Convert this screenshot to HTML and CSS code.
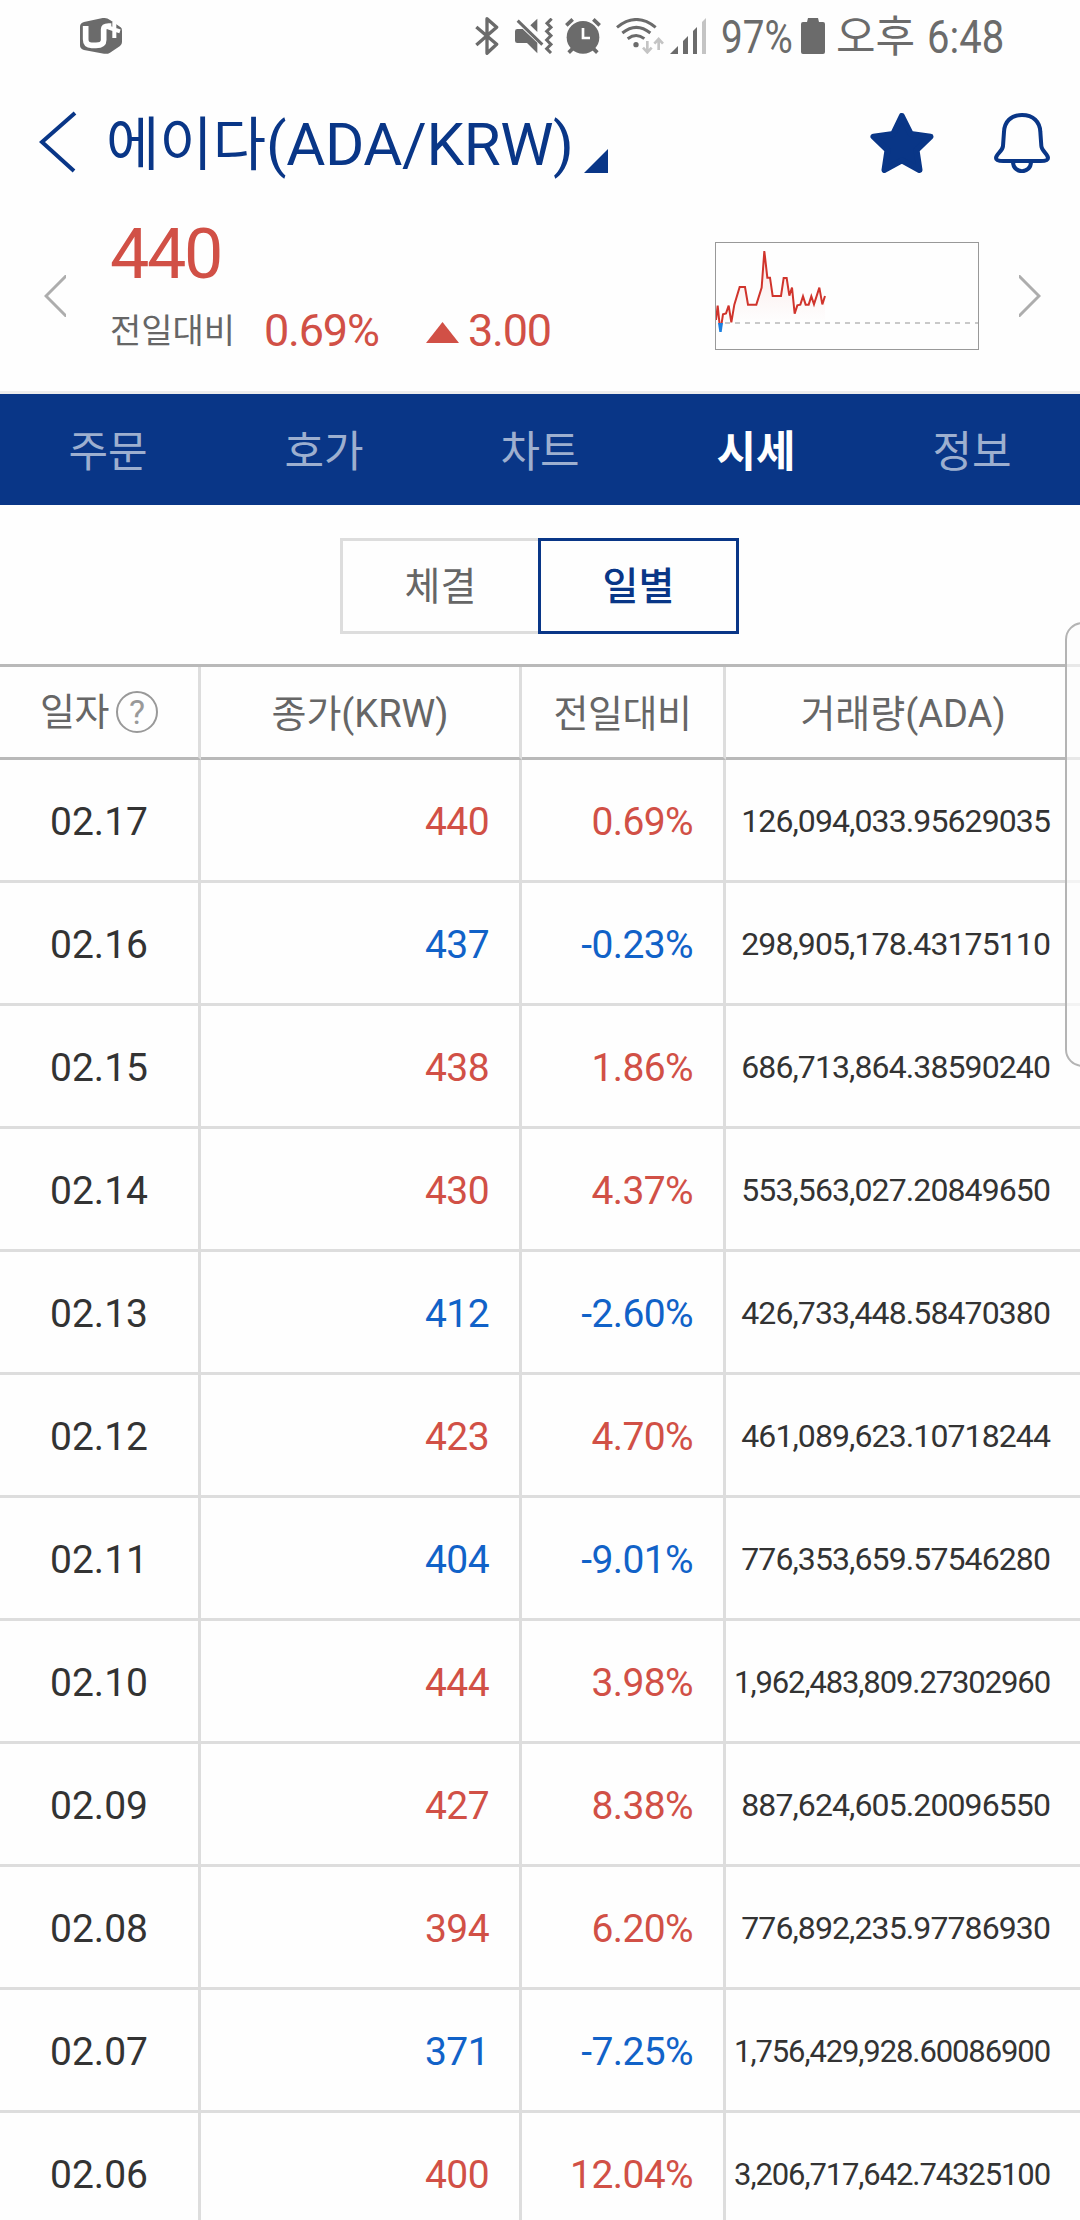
FILE: index.html
```
<!DOCTYPE html>
<html lang="ko">
<head>
<meta charset="utf-8">
<title>에이다(ADA/KRW)</title>
<link rel="stylesheet" href="styles.css">
</head>
<body>

<div class="statusbar">
    <svg class="carrier" width="42" height="36" viewBox="232 54 126 108">
        <path fill="#6b6b6b" d="M244 66 L300 54 Q312 53 322 60 L354 82 Q358 85 358 92 V126 Q358 134 352 138 L322 158 Q314 163 304 161 L244 150 Q232 147 232 136 V80 Q232 69 244 66Z"/>
        <path fill="none" stroke="#fff" stroke-width="17" d="M249 78 V118 Q249 136 267 136 H280 Q303 136 303 120 V88 Q303 78 318 78 H326"/>
        <path fill="none" stroke="#fff" stroke-width="12" d="M335 66 V114 M316 82 L352 94"/>
    </svg>
    <div class="status__icons">
        <svg width="24" height="38" viewBox="104 50 72 114" fill="none" stroke="#6b6b6b" stroke-width="10">
            <path stroke-linejoin="round" d="M108 80 L169 132 L140 159 V55 L169 81 L108 134"/>
        </svg>
        <svg width="38" height="36" viewBox="225 54 114 108">
            <path fill="#6b6b6b" d="M232 87 H248 L292 128 V160 L261 129 H232 Q225 129 225 122 V94 Q225 87 232 87Z M271 76 L292 56 V96Z"/>
            <path fill="none" stroke="#fff" stroke-width="5" d="M240 55 L316 130"/>
            <path fill="none" stroke="#6b6b6b" stroke-width="9" d="M233 62 L307 134"/>
            <path fill="none" stroke="#6b6b6b" stroke-width="9" d="M335 56 L321 70 L333 82 L320 94 L333 107 L320 120 L333 133 L320 146 L333 159"/>
        </svg>
        <svg width="36" height="36" viewBox="375 54 108 108">
            <circle cx="429" cy="112" r="49" fill="#6b6b6b"/>
            <path fill="none" stroke="#6b6b6b" stroke-width="11" d="M379 76 L398 58 M460 58 L479 76 M398 146 L386 158 M460 146 L472 158"/>
            <path fill="none" stroke="#fff" stroke-width="8" d="M429 84 V114 H450"/>
        </svg>
        <svg width="48" height="36" viewBox="526 54 144 108">
            <g fill="none" stroke="#6b6b6b" stroke-width="9">
                <path d="M529 82 Q587 35 645 82"/>
                <path d="M545 99 Q587 65 629 99"/>
                <path d="M561 116 Q587 97 611 116"/>
            </g>
            <circle cx="586" cy="134" r="8" fill="#6b6b6b"/>
            <path fill="none" stroke="#c4c4c4" stroke-width="8" d="M620 123 V157 M607 143 L620 157 L633 143 M654 150 V117 M641 131 L654 117 L667 131"/>
        </svg>
        <svg width="37" height="36" viewBox="687 54 111 108">
            <path fill="#6b6b6b" d="M687 162 L711 138 V162Z M726 162 V123 L741 108 V162Z M756 162 V93 L768 81 V162Z"/>
            <path fill="#c4c4c4" d="M783 162 V66 L795 54 V162Z"/>
        </svg>
    </div>
    <span class="status__battery">97%</span>
    <svg class="battery" width="24" height="36" viewBox="0 0 24 36">
        <path fill="#6b6b6b" d="M7 0 H17 L18 4 H22 Q24 4 24 6 V34 Q24 36 22 36 H2 Q0 36 0 34 V6 Q0 4 2 4 H6Z"/>
    </svg>
    <span class="status__ampm">오후</span>
    <span class="status__time">6:48</span>
</div>

<header class="header">
    <svg class="back" width="38" height="62" viewBox="0 0 38 62">
        <path fill="none" stroke="#093687" stroke-width="4" d="M36 2 L3 31 L35 60"/>
    </svg>
    <h1 class="title"><span class="title__name">에이다</span><span class="title__pair">(ADA/KRW)</span></h1>
    <svg class="title__arrow" width="24" height="24" viewBox="0 0 24 24"><path fill="#093687" d="M24 0 V24 H0Z"/></svg>
    <svg class="star" width="64" height="60" viewBox="390 339 189 180">
        <path fill="#093687" stroke="#093687" stroke-width="18" stroke-linejoin="round" d="M484 348 L511 402 L570 410 L528 450 L537 510 L484 481 L432 510 L441 450 L399 410 L458 402Z"/>
    </svg>
    <svg class="bell" width="56" height="60" viewBox="762 339 168 180" fill="none" stroke="#093687" stroke-width="12">
        <path d="M846 345 C812 345 793 366 792 396 L789 438 C788 454 768 461 768 474 Q768 483 790 483 H902 Q924 483 924 474 C924 461 905 454 904 438 L901 396 C900 366 880 345 846 345Z"/>
        <path d="M819 485 C819 523 873 523 873 485"/>
    </svg>
</header>

<section class="summary">
    <svg class="prev" width="22" height="42" viewBox="0 0 22 42"><path fill="none" stroke="#adadad" stroke-width="3" d="M23 0 L2 21 L23 42"/></svg>
    <div class="price">
        <div class="price__now">440</div>
        <div class="price__change">
            <span class="label">전일대비</span>
            <span class="rate">0.69%</span>
            <svg class="up" width="33" height="21" viewBox="0 0 33 21"><path fill="#d15046" d="M16.5 0 L33 21 H0Z"/></svg>
            <span class="diff">3.00</span>
        </div>
    </div>
    <svg class="chart" width="264" height="108" viewBox="75 66 792 324">
        <defs>
            <linearGradient id="fade" x1="0" y1="0" x2="0" y2="1">
                <stop offset="0" stop-color="#d8453b" stop-opacity=".12"/>
                <stop offset="1" stop-color="#d8453b" stop-opacity="0"/>
            </linearGradient>
            <clipPath id="above"><rect x="75" y="66" width="792" height="243"/></clipPath>
            <clipPath id="below"><rect x="75" y="309" width="792" height="81"/></clipPath>
        </defs>
        <path fill="none" stroke="#c9c9c9" stroke-width="6" stroke-dasharray="15 15" d="M105 309 H867"/>
        <path fill="url(#fade)" d="M99 309 V283 L108 280 L116 257 L124 307 L133 254 L149 201 H165 L174 254 H199 L215 203 L223 93 L232 173 H240 L248 228 H273 L281 174 H290 L298 227 L306 203 L314 281 L322 256 L331 254 L339 229 L347 254 H356 L364 229 L372 253 L388 203 L397 253 L405 228 V309Z"/>
        <path clip-path="url(#above)" fill="none" stroke="#d0342c" stroke-width="6" d="M78 300 L83 257 L91 335 L99 283 L108 280 L116 257 L124 307 L133 254 L149 201 H165 L174 254 H199 L215 203 L223 93 L232 173 H240 L248 228 H273 L281 174 H290 L298 227 L306 203 L314 281 L322 256 L331 254 L339 229 L347 254 H356 L364 229 L372 253 L388 203 L397 253 L405 228"/>
        <path clip-path="url(#below)" fill="#1a7fe0" d="M84 309 L88 336 H95 L99 309Z"/>
        <rect x="76.5" y="67.5" width="789" height="321" fill="none" stroke="#999" stroke-width="3"/>
    </svg>
    <svg class="next" width="22" height="42" viewBox="0 0 22 42"><path fill="none" stroke="#adadad" stroke-width="3" d="M-1 0 L20 21 L-1 42"/></svg>
</section>

<nav class="tabs">
    <a>주문</a>
    <a>호가</a>
    <a>차트</a>
    <a class="active">시세</a>
    <a>정보</a>
</nav>

<div class="switch">
    <button class="switch__btn">체결</button>
    <button class="switch__btn switch__btn--on">일별</button>
</div>

<table class="daily">
    <thead>
        <tr>
            <th class="col-date"><div class="date-head">일자<span class="help">?</span></div></th>
            <th class="col-close">종가(KRW)</th>
            <th class="col-rate">전일대비</th>
            <th class="col-vol">거래량(ADA)</th>
        </tr>
    </thead>
    <tbody>
        <tr class="rise"><td>02.17</td><td>440</td><td>0.69%</td><td>126,094,033.95629035</td></tr>
        <tr class="fall"><td>02.16</td><td>437</td><td>-0.23%</td><td>298,905,178.43175110</td></tr>
        <tr class="rise"><td>02.15</td><td>438</td><td>1.86%</td><td>686,713,864.38590240</td></tr>
        <tr class="rise"><td>02.14</td><td>430</td><td>4.37%</td><td>553,563,027.20849650</td></tr>
        <tr class="fall"><td>02.13</td><td>412</td><td>-2.60%</td><td>426,733,448.58470380</td></tr>
        <tr class="rise"><td>02.12</td><td>423</td><td>4.70%</td><td>461,089,623.10718244</td></tr>
        <tr class="fall"><td>02.11</td><td>404</td><td>-9.01%</td><td>776,353,659.57546280</td></tr>
        <tr class="rise"><td>02.10</td><td>444</td><td>3.98%</td><td class="long">1,962,483,809.27302960</td></tr>
        <tr class="rise"><td>02.09</td><td>427</td><td>8.38%</td><td>887,624,605.20096550</td></tr>
        <tr class="rise"><td>02.08</td><td>394</td><td>6.20%</td><td>776,892,235.97786930</td></tr>
        <tr class="fall"><td>02.07</td><td>371</td><td>-7.25%</td><td class="long">1,756,429,928.60086900</td></tr>
        <tr class="rise"><td>02.06</td><td>400</td><td>12.04%</td><td class="long">3,206,717,642.74325100</td></tr>
    </tbody>
</table>

<!-- edge panel handle -->
<div class="edge"></div>

</body>
</html>
```
FILE: styles.css
```
* {
    box-sizing: border-box;
    margin: 0;
    padding: 0;
}

body {
    position: relative;
    width: 1080px;
    height: 2220px;
    overflow: hidden;
    background: #fefefe;
    color: #333;
    font-family: Roboto, "Noto Sans CJK KR", sans-serif;
}

svg {
    display: block;
    flex: none;
}

/* status bar */
.statusbar {
    display: flex;
    align-items: flex-start;
    height: 72px;
    padding: 18px 0 0 80px;
    color: #6b6b6b;
    white-space: nowrap;
}
.status__icons {
    display: flex;
    margin-left: 353px;
}
.status__icons svg:nth-child(1) {
    margin-top: -1px;
}
.status__icons svg:nth-child(2) {
    margin-left: 16px;
}
.status__icons svg:nth-child(3) {
    margin-left: 12px;
}
.status__icons svg:nth-child(4) {
    margin-left: 15px;
}
.status__icons svg:nth-child(5) {
    margin-left: 6px;
}
.status__battery,
.status__time {
    font-size: 46px;
    line-height: 38px;
    transform: scaleX(.87);
    transform-origin: 0 0;
}
.status__battery {
    width: 80px;
    margin-left: 14px;
    transform: scaleX(.84);
}
.status__ampm {
    width: 91px;
    margin-left: 11px;
    font-size: 43px;
    line-height: 38px;
}

/* title row */
.header {
    display: flex;
    height: 130px;
    padding-left: 39px;
    color: #093687;
}
.back {
    margin-top: 39px;
}
.title {
    width: 474px;
    margin-left: 29px;
    padding-top: 28px;
    font-size: 60px;
    font-weight: 400;
    line-height: 90px;
    white-space: nowrap;
}
.title__name {
    font-size: 58px;
}
.title__pair {
    letter-spacing: -.4px;
}
.title__arrow {
    margin: 77px 0 0 4px;
}
.star {
    margin: 41px 0 0 262px;
}
.bell {
    margin: 41px 0 0 60px;
}

/* price summary */
.summary {
    display: flex;
    height: 192px;
    padding-left: 44px;
    border-bottom: 3px solid #ededed;
}
.prev,
.next {
    margin-top: 73px;
}
.price {
    width: 648px;
    padding: 12px 0 0 44px;
    color: #d15046;
}
.price__now {
    font-size: 70px;
    line-height: 80px;
    letter-spacing: -2.4px;
}
.price__change {
    display: flex;
    height: 60px;
    margin-top: 7px;
    font-size: 45px;
    line-height: 60px;
    letter-spacing: -1.2px;
}
.label {
    width: 154px;
    color: #666;
    font-size: 34px;
    letter-spacing: 0;
}
.rate {
    width: 162px;
}
.up {
    margin: 21px 9px 0 0;
}
.chart {
    margin: 40px 0 0 1px;
}
.next {
    margin-left: 40px;
}

/* tabs */
.tabs {
    display: flex;
    height: 111px;
    background: #093687;
}
.tabs a {
    flex: 1;
    color: #9dafcf;
    font-size: 43px;
    line-height: 116px;
    text-align: center;
}
.tabs .active {
    color: #fff;
    font-weight: bold;
}

.switch {
    display: flex;
    height: 159px;
    padding: 33px 0 0 340px;
}
.switch__btn {
    width: 201px;
    height: 96px;
    padding-top: 2px;
    border: 3px solid #ddd;
    background: none;
    color: #666;
    font: 400 39px/88px Roboto, "Noto Sans CJK KR", sans-serif;
}
.switch__btn--on {
    margin-left: -3px;
    border-color: #093687;
    color: #093687;
    font-weight: 500;
}

/* daily prices */
.daily {
    width: 1080px;
    table-layout: fixed;
    border-spacing: 0;
    border-top: 3px solid #b9b9b9;
}
.daily th {
    height: 93px;
    padding-bottom: 4px;
    border-right: 3px solid #ddd;
    border-bottom: 3px solid #b9b9b9;
    color: #666;
    font-size: 38px;
    font-weight: 400;
    white-space: nowrap;
}
.daily td {
    height: 123px;
    padding-top: 3px;
    border-right: 3px solid #ddd;
    border-bottom: 3px solid #ddd;
    font-size: 39px;
    text-align: right;
    white-space: nowrap;
}
.daily .col-date {
    width: 201px;
    padding-bottom: 0;
    letter-spacing: -.5px;
}
.daily .col-close {
    width: 321px;
}
.daily .col-rate {
    width: 204px;
    letter-spacing: -.5px;
}
.daily th:last-child,
.daily td:last-child {
    border-right: 0;
}
.daily td:nth-child(1) {
    text-align: center;
}
.daily td:nth-child(2),
.daily td:nth-child(3) {
    padding-right: 30px;
    letter-spacing: -.6px;
}
.daily td:nth-child(4) {
    padding-top: 2px;
    padding-right: 30px;
    font-size: 32px;
    letter-spacing: -.9px;
}
.daily td.long:nth-child(4) {
    font-size: 31px;
    letter-spacing: -1.1px;
}
.rise td:nth-child(2),
.rise td:nth-child(3) {
    color: #d15046;
}
.fall td:nth-child(2),
.fall td:nth-child(3) {
    color: #1162c8;
}
.date-head {
    display: flex;
    align-items: center;
    justify-content: center;
    line-height: 50px;
}
.help {
    width: 42px;
    height: 42px;
    margin-left: 7px;
    border: 2px solid #999;
    border-radius: 50%;
    color: #999;
    font-size: 34px;
    line-height: 39px;
    letter-spacing: 0;
}

.edge {
    position: absolute;
    top: 622px;
    right: -20px;
    width: 35px;
    height: 445px;
    border: 2px solid #b4b4b4;
    border-radius: 20px;
    background: rgba(252, 252, 252, .7);
}
```
